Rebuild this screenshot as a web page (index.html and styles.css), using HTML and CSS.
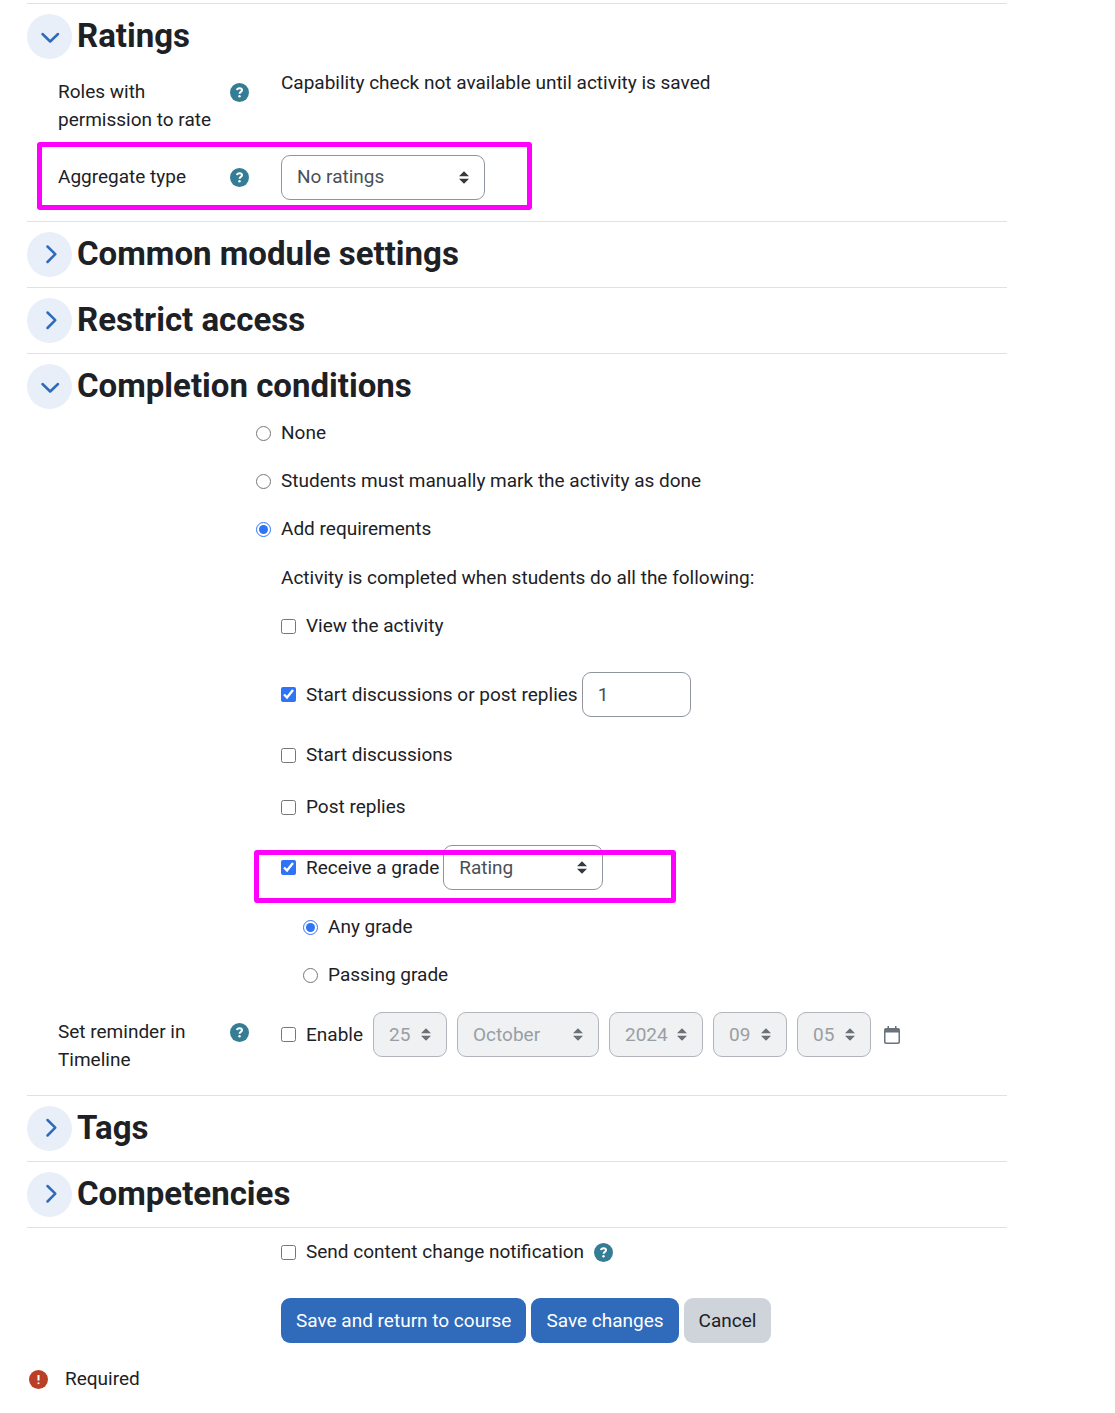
FILE: index.html
```html
<!DOCTYPE html>
<html lang="en">
<head>
    <meta charset="UTF-8">
    <meta name="viewport" content="width=device-width, initial-scale=1.0">
    <title>Forum settings</title>
    <link rel="stylesheet" href="styles.css">
</head>
<body>
    <form class="settings-form">
        <section class="section">
            <div class="section-header">
                <button type="button" class="toggle" aria-label="Collapse Ratings" aria-expanded="true">
                    <svg viewBox="0 0 45 45"><path d="M15.500 20 23.200 27.500 31 20"/></svg>
                </button>
                <h2>Ratings</h2>
            </div>
            <div class="section-body">
                <div class="row">
                    <div class="row-label row-label-offset">
                        <span>Roles with permission to rate</span>
                        <button type="button" class="help" aria-label="Help with roles">
                            <svg viewBox="0 0 19 19"><circle cx="9.500" cy="9.500" r="9.500"/><path d="M7 7.200c.2-1.400 1.100-2 2.500-2s2.500.8 2.500 2c0 1.700-2.400 1.600-2.400 3.500"/><circle class="dot" cx="9.500" cy="13.300" r="1.200"/></svg>
                        </button>
                    </div>
                    <div>Capability check not available until activity is saved</div>
                </div>
                <div class="row row-field">
                    <div class="row-label">
                        <label for="aggregate">Aggregate type</label>
                        <button type="button" class="help" aria-label="Help with aggregate type">
                            <svg viewBox="0 0 19 19"><circle cx="9.500" cy="9.500" r="9.500"/><path d="M7 7.200c.2-1.400 1.100-2 2.500-2s2.500.8 2.500 2c0 1.700-2.400 1.600-2.400 3.500"/><circle class="dot" cx="9.500" cy="13.300" r="1.200"/></svg>
                        </button>
                    </div>
                    <div>
                        <select id="aggregate" class="select select-wide">
                            <option>No ratings</option>
                        </select>
                    </div>
                    <div class="highlight highlight-aggregate"></div>
                </div>
            </div>
        </section>

        <section class="section">
            <div class="section-header">
                <button type="button" class="toggle" aria-label="Expand Common module settings" aria-expanded="false">
                    <svg viewBox="0 0 45 45"><path d="M20.500 14.500 28.300 22.200 20.500 30"/></svg>
                </button>
                <h2>Common module settings</h2>
            </div>
        </section>

        <section class="section">
            <div class="section-header">
                <button type="button" class="toggle" aria-label="Expand Restrict access" aria-expanded="false">
                    <svg viewBox="0 0 45 45"><path d="M20.500 14.500 28.300 22.200 20.500 30"/></svg>
                </button>
                <h2>Restrict access</h2>
            </div>
        </section>

        <section class="section">
            <div class="section-header">
                <button type="button" class="toggle" aria-label="Collapse Completion conditions" aria-expanded="true">
                    <svg viewBox="0 0 45 45"><path d="M15.500 20 23.200 27.500 31 20"/></svg>
                </button>
                <h2>Completion conditions</h2>
            </div>
            <div class="section-body">
                <div class="completion">
                    <div class="choices">
                        <label class="choice"><input type="radio" name="completion">None</label>
                        <label class="choice"><input type="radio" name="completion">Students must manually mark the activity as done</label>
                        <label class="choice"><input type="radio" name="completion" checked>Add requirements</label>
                    </div>
                    <div class="requirements">
                        <div>Activity is completed when students do all the following:</div>
                        <label class="choice"><input type="checkbox">View the activity</label>
                        <div class="conditions">
                            <div class="condition">
                                <label class="choice"><input type="checkbox" checked>Start discussions or post replies</label>
                                <input type="text" class="number" value="1" aria-label="Number of discussions or replies">
                            </div>
                            <label class="choice"><input type="checkbox">Start discussions</label>
                            <label class="choice"><input type="checkbox">Post replies</label>
                            <div class="condition">
                                <label class="choice"><input type="checkbox" checked>Receive a grade</label>
                                <select class="select select-grade" aria-label="Grade item">
                                    <option>Rating</option>
                                </select>
                                <div class="highlight highlight-grade"></div>
                            </div>
                        </div>
                        <div class="grades">
                            <label class="choice"><input type="radio" name="grade" checked>Any grade</label>
                            <label class="choice"><input type="radio" name="grade">Passing grade</label>
                        </div>
                    </div>
                </div>
                <div class="row">
                    <div class="row-label row-label-offset">
                        <span>Set reminder in Timeline</span>
                        <button type="button" class="help" aria-label="Help with reminder">
                            <svg viewBox="0 0 19 19"><circle cx="9.500" cy="9.500" r="9.500"/><path d="M7 7.200c.2-1.400 1.100-2 2.500-2s2.500.8 2.500 2c0 1.700-2.400 1.600-2.400 3.500"/><circle class="dot" cx="9.500" cy="13.300" r="1.200"/></svg>
                        </button>
                    </div>
                    <div class="reminder">
                        <label class="choice"><input type="checkbox">Enable</label>
                        <select class="select select-short" aria-label="Day" disabled><option>25</option></select>
                        <select class="select select-month" aria-label="Month" disabled><option>October</option></select>
                        <select class="select select-year" aria-label="Year" disabled><option>2024</option></select>
                        <select class="select select-short" aria-label="Hour" disabled><option>09</option></select>
                        <select class="select select-short" aria-label="Minute" disabled><option>05</option></select>
                        <button type="button" class="calendar" aria-label="Calendar">
                            <svg viewBox="0 0 18 20"><path d="M3 3h12a2 2 0 0 1 2 2V17a2 2 0 0 1-2 2H3a2 2 0 0 1-2-2V5a2 2 0 0 1 2-2zM2.500 7.500v9a1 1 0 0 0 1 1h11a1 1 0 0 0 1-1v-9z" fill-rule="evenodd"/><path d="M4.500 1h1.500v3H4.500zM12 1h1.500v3H12z"/></svg>
                        </button>
                    </div>
                </div>
            </div>
        </section>

        <section class="section">
            <div class="section-header">
                <button type="button" class="toggle" aria-label="Expand Tags" aria-expanded="false">
                    <svg viewBox="0 0 45 45"><path d="M20.500 14 28.300 21.700 20.500 29.500"/></svg>
                </button>
                <h2>Tags</h2>
            </div>
        </section>

        <section class="section">
            <div class="section-header">
                <button type="button" class="toggle" aria-label="Expand Competencies" aria-expanded="false">
                    <svg viewBox="0 0 45 45"><path d="M20.500 14 28.300 21.700 20.500 29.500"/></svg>
                </button>
                <h2>Competencies</h2>
            </div>
        </section>

        <div class="form-footer">
            <div class="notify">
                <label class="choice"><input type="checkbox">Send content change notification</label>
                <button type="button" class="help" aria-label="Help with notification">
                    <svg viewBox="0 0 19 19"><circle cx="9.500" cy="9.500" r="9.500"/><path d="M7 7.200c.2-1.400 1.100-2 2.500-2s2.500.8 2.500 2c0 1.700-2.400 1.600-2.400 3.500"/><circle class="dot" cx="9.500" cy="13.300" r="1.200"/></svg>
                </button>
            </div>
            <div class="actions">
                <button type="submit" class="btn btn-primary">Save and return to course</button>
                <button type="submit" class="btn btn-primary">Save changes</button>
                <button type="button" class="btn btn-secondary">Cancel</button>
            </div>
        </div>

        <div class="required">
            <svg viewBox="0 0 19 19"><circle cx="9.500" cy="9.500" r="9.500"/><path d="M9.500 5v5.500"/><circle class="dot" cx="9.500" cy="13.300" r="1"/></svg>
            Required
        </div>
    </form>
</body>
</html>
```
FILE: styles.css
```css
* {
    box-sizing: border-box;
}

body {
    margin: 0;
    background: #fff;
    color: #1d2125;
    font-family: Roboto, "Liberation Sans", sans-serif;
    font-size: 19px;
    line-height: 28px;
}

button,
input,
select {
    margin: 0;
    font: inherit;
}

.settings-form {
    padding: 3px 108px 20px 27px;
}

.section {
    border-top: 1px solid #dee2e6;
}

.section-header {
    display: flex;
    align-items: center;
    gap: 5px;
    padding: 10px 0;
}

.section-header h2 {
    margin: 0;
    padding-bottom: 2px;
    font-size: 33px;
    font-weight: 700;
    line-height: 40px;
}

.toggle {
    width: 45px;
    height: 45px;
    padding: 0;
    border: none;
    border-radius: 50%;
    background: #e8eff8;
}

.toggle svg {
    display: block;
    fill: none;
    stroke: #2f6abb;
    stroke-width: 2.5;
    stroke-linecap: round;
    stroke-linejoin: round;
}

.section-body {
    padding: 0 0 21px 31px;
}

.row {
    display: grid;
    grid-template-columns: 223px 1fr;
}

.row-field {
    position: relative;
    align-items: center;
    min-height: 46px;
    margin-top: 20px;
}

.row-label {
    display: flex;
    justify-content: space-between;
    gap: 16px;
    padding-right: 32px;
}

.row-label-offset {
    padding-top: 9px;
}

.help {
    flex: none;
    display: flex;
    align-items: center;
    height: 28px;
    padding: 0;
    border: none;
    background: none;
}

.help svg,
.required svg {
    width: 19px;
    height: 19px;
    fill: #357d95;
}

.help path,
.required path {
    fill: none;
    stroke: #fff;
    stroke-width: 2;
}

.help .dot,
.required .dot {
    fill: #fff;
}

.select,
.number {
    display: block;
    height: 45px;
    padding: 0 15px;
    border: 1px solid #8f959e;
    border-radius: 9px;
    background: #fff;
    color: #495057;
}

.select {
    appearance: none;
    background: #fff url("data:image/svg+xml,%3Csvg xmlns='http://www.w3.org/2000/svg' viewBox='0 0 4 5'%3E%3Cpath fill='%23343a40' d='M2 0L0 2h4zm0 5L0 3h4z'/%3E%3C/svg%3E") no-repeat right 15px center / 10px 13px;
}

.select:disabled {
    background-color: #eff1f3;
    background-image: url("data:image/svg+xml,%3Csvg xmlns='http://www.w3.org/2000/svg' viewBox='0 0 4 5'%3E%3Cpath fill='%236c7077' d='M2 0L0 2h4zm0 5L0 3h4z'/%3E%3C/svg%3E");
    border-color: #b1b5bb;
    color: #999ea4;
    opacity: 1;
}

.select-wide {
    width: 204px;
}

.select-grade {
    width: 160px;
}

.select-short {
    width: 74px;
}

.select-month {
    width: 142px;
}

.select-year {
    width: 94px;
}

.number {
    width: 109px;
}

.choice {
    display: flex;
    align-items: center;
    gap: 10px;
}

.choice input {
    flex: none;
    width: 15px;
    height: 15px;
    accent-color: #2f73f6;
}

/* radios hang to the left of the field column */
.completion {
    margin-left: 198px;
}

.choices,
.requirements,
.grades {
    display: flex;
    flex-direction: column;
    align-items: flex-start;
    gap: 20px;
}

.requirements {
    margin: 21px 0 20px 25px;
}

.conditions {
    display: flex;
    flex-direction: column;
    align-items: flex-start;
    gap: 24px;
    margin-top: 12px;
}

.condition {
    position: relative;
    display: flex;
    align-items: center;
    gap: 4px;
}

.grades {
    padding: 3px 0 0 22px;
}

.reminder {
    display: flex;
    align-items: center;
    gap: 10px;
    height: 45px;
    margin-top: 3px;
}

.calendar {
    padding: 0;
    margin-left: 2px;
    border: none;
    background: none;
}

.calendar svg {
    display: block;
    width: 18px;
    height: 20px;
    fill: #6a737b;
}

.highlight {
    position: absolute;
    border: 5px solid #ff00ff;
    border-radius: 3px;
    pointer-events: none;
}

.highlight-aggregate {
    top: -12px;
    left: -21px;
    width: 495px;
    height: 68px;
}

.highlight-grade {
    top: 5px;
    left: -27px;
    width: 422px;
    height: 53px;
}

.form-footer {
    padding: 10px 0 0 254px;
    border-top: 1px solid #dee2e6;
}

.notify {
    display: flex;
    gap: 10px;
}

.actions {
    display: flex;
    gap: 5px;
    margin-top: 32px;
}

.btn {
    height: 45px;
    padding: 0 15px;
    border: none;
    border-radius: 9px;
}

.btn-primary {
    background: #2f6abb;
    color: #fff;
}

.btn-secondary {
    background: #ced4da;
    color: #1d2125;
}

.required {
    display: flex;
    align-items: center;
    gap: 17px;
    margin-top: 22px;
    padding-left: 2px;
}

.required svg {
    fill: #b93f26;
}
```
